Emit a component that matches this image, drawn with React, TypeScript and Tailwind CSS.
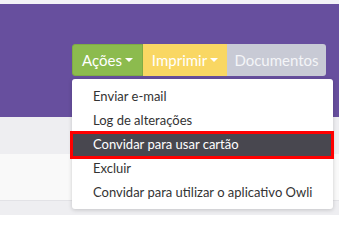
import { useState } from "react"

const items = [
  "Enviar e-mail",
  "Log de alterações",
  "Convidar para usar cartão",
  "Excluir",
  "Convidar para utilizar o aplicativo Owli",
]

function Caret() {
  return <span className="ml-[3px] inline-block border-x-[4px] border-t-[4px] border-x-transparent border-t-current align-middle" />
}

export default function App() {
  const [active] = useState(2)

  return (
    <div className="relative h-[215px] w-[339px] overflow-hidden bg-[#eeeef1] font-['Lato',sans-serif]">
      <div className="h-[4px] bg-[#f3f2f7]" />
      <div className="h-[113px] bg-[#674f9e] pl-[72px] pt-[40px]">
        <div className="relative inline-flex">
          <div className="flex h-[32px] text-[15px]">
            <button className="flex w-[71px] items-center justify-center rounded-l-[3px] border border-[#7fab45] bg-[#8cbb4e] text-white">
              Ações
              <Caret />
            </button>
            <button className="flex w-[84px] items-center justify-center bg-[#f9d763] text-white">
              Imprimir
              <Caret />
            </button>
            <button className="flex w-[99px] items-center justify-center rounded-r-[3px] bg-[#c8cad5] text-[#f4f5f8]">
              Documentos
            </button>
          </div>

          <ul className="absolute left-0 top-[35px] w-[261px] rounded-[3px] bg-white pb-[4px] pt-[6px] text-[13px] text-[#333] shadow-[0_1px_4px_rgba(0,0,0,0.18)]">
            {items.map((item, i) => (
              <li
                key={item}
                className={
                  i === active
                    ? "relative flex h-[24px] items-center bg-[#48474f] pl-[21px] text-white"
                    : "flex h-[24px] items-center pl-[21px]"
                }
              >
                {item}
                {i === active && (
                  <span className="absolute -bottom-[2px] -left-[2px] -right-[1px] -top-[2px] border-[3px] border-[#ff0000]" />
                )}
              </li>
            ))}
          </ul>
        </div>
      </div>
      <div className="h-[37px]" />
      <div className="h-[47px] border-b border-[#e2e2e6] bg-[#f9f9f9]" />
    </div>
  )
}
